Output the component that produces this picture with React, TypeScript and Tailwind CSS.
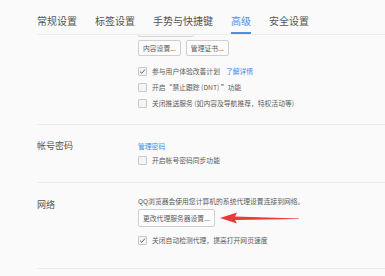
import React from "react";

const tabs = ["常规设置", "标签设置", "手势与快捷键", "高级", "安全设置"];

function Checkbox({ checked }: { checked?: boolean }) {
  return (
    <span className="flex h-[9px] w-[9px] shrink-0 items-center justify-center rounded-[1px] border border-[#c9c9c9] bg-[#f4f4f4]">
      {checked && (
        <svg width="7" height="7" viewBox="0 0 7 7">
          <path d="M1 3.6 L2.8 5.3 L6 1.5" fill="none" stroke="#555" strokeWidth="0.9" />
        </svg>
      )}
    </span>
  );
}

function CheckRow({ checked, label, link }: { checked?: boolean; label: string; link?: string }) {
  return (
    <div className="flex h-4 items-center gap-[5px] whitespace-nowrap">
      <Checkbox checked={checked} />
      <span className="text-[6.8px] text-[#5a5a5a]">{label}</span>
      {link && <span className="ml-[1px] text-[6.8px] text-[#3b8ce8]">{link}</span>}
    </div>
  );
}

function SmallButton({ label, className = "" }: { label: string; className?: string }) {
  return (
    <div
      className={`flex w-fit items-center whitespace-nowrap rounded-[2px] border border-[#cfcfcf] bg-[#fcfcfc] px-[4px] text-[6.8px] text-[#5a5a5a] ${className}`}
    >
      {label}
    </div>
  );
}

export default function App() {
  return (
    <div
      className="relative h-[276px] w-[385px] overflow-hidden bg-[#fafafa]"
      style={{ fontFamily: '"Noto Sans CJK SC", "Noto Sans", sans-serif' }}
    >
      {/* 상단 탭 */}
      <div className="ml-[37px] flex h-[35px] items-end gap-[18px] border-b border-[#ececec]">
        {tabs.map((tab) => (
          <div
            key={tab}
            className={`flex h-[20px] items-start border-b-2 text-[10px] leading-[14px] ${
              tab === "高级" ? "border-[#4a90e2] text-[#4a90e2]" : "border-transparent text-[#555]"
            }`}
          >
            {tab}
          </div>
        ))}
      </div>

      {/* 가려진 버튼 아래쪽 */}
      <div className="ml-[138px] h-[2px] w-[56px] rounded-b-[2px] border-x border-b border-[#d6d6d6]" />

      {/* 고급 - 상단 */}
      <div className="ml-[37px] border-b border-[#ececec] pb-[13px]">
        <div className="ml-[101px] flex flex-col">
          <div className="mt-[3px] flex gap-[5px]">
            <SmallButton label="内容设置..." className="h-4" />
            <SmallButton label="管理证书..." className="h-4" />
          </div>
          <div className="mt-[7px] flex flex-col">
            <CheckRow checked label="参与用户体验改善计划" link="了解详情" />
            <CheckRow label="开启“禁止跟踪 (DNT) ”功能" />
            <CheckRow label="关闭推送服务 (如内容及导航推荐，特权活动等)" />
          </div>
        </div>
      </div>

      {/* 帐号密码 */}
      <div className="ml-[37px] flex border-b border-[#ececec] pt-[15px] pb-[14px]">
        <div className="w-[101px] text-[9px] leading-[12px] text-[#555]">帐号密码</div>
        <div className="flex flex-col">
          <div className="h-3 text-[6.8px] leading-[12px] text-[#3b8ce8]">管理密码</div>
          <CheckRow label="开启帐号密码同步功能" />
        </div>
      </div>

      {/* 网络 */}
      <div className="relative ml-[37px] flex border-b border-[#ececec] pt-[13px] pb-[20px]">
        <div className="mt-[3px] w-[101px] text-[9px] leading-[12px] text-[#555]">网络</div>
        <div className="flex flex-col">
          <div className="h-[13px] whitespace-nowrap text-[6.8px] leading-[10px] text-[#5a5a5a]">
            QQ浏览器会使用您计算机的系统代理设置连接到网络。
          </div>
          <SmallButton label="更改代理服务器设置..." className="h-[18px]" />
          <div className="mt-[5px]">
            <CheckRow checked label="关闭自动检测代理，提高打开网页速度" />
          </div>
        </div>
      </div>

      {/* 빨간 화살표 */}
      <svg className="absolute left-[217px] top-[210px]" width="84" height="16" viewBox="0 0 84 16">
        <path d="M3 8 L20 2.5 L18 6.6 L82 8.6 L82 9 L18 10 L20 13.5 Z" fill="#e8393b" />
      </svg>
    </div>
  );
}
